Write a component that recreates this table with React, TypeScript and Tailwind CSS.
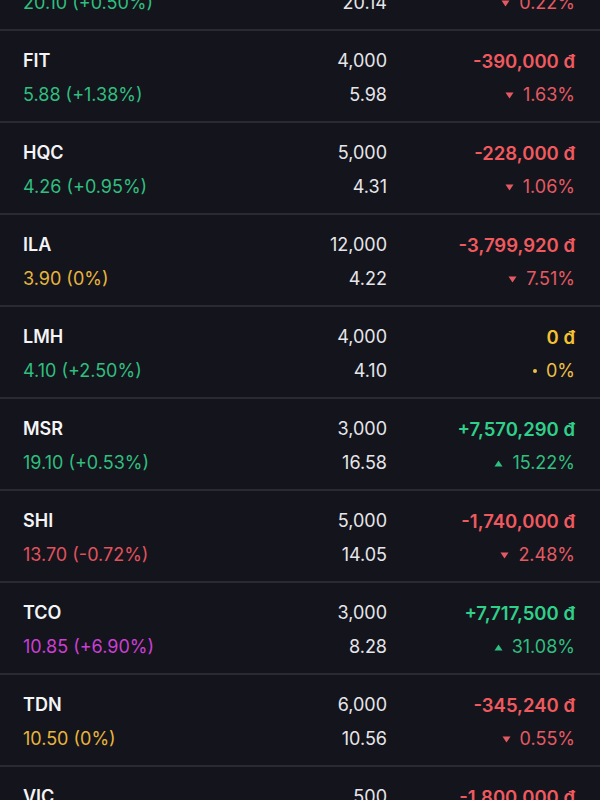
import React from "react";

type Tone = "up" | "down" | "ref" | "ceil";

type Row = {
  sym: string;
  qty: string;
  pl: string;
  plTone: Tone;
  price: string;
  priceTone: Tone;
  cost: string;
  pct: string;
};

const rows: Row[] = [
  { sym: "DXG", qty: "2,000", pl: "-88,000 đ", plTone: "down", price: "20.10 (+0.50%)", priceTone: "up", cost: "20.14", pct: "0.22%" },
  { sym: "FIT", qty: "4,000", pl: "-390,000 đ", plTone: "down", price: "5.88 (+1.38%)", priceTone: "up", cost: "5.98", pct: "1.63%" },
  { sym: "HQC", qty: "5,000", pl: "-228,000 đ", plTone: "down", price: "4.26 (+0.95%)", priceTone: "up", cost: "4.31", pct: "1.06%" },
  { sym: "ILA", qty: "12,000", pl: "-3,799,920 đ", plTone: "down", price: "3.90 (0%)", priceTone: "ref", cost: "4.22", pct: "7.51%" },
  { sym: "LMH", qty: "4,000", pl: "0 đ", plTone: "ref", price: "4.10 (+2.50%)", priceTone: "up", cost: "4.10", pct: "0%" },
  { sym: "MSR", qty: "3,000", pl: "+7,570,290 đ", plTone: "up", price: "19.10 (+0.53%)", priceTone: "up", cost: "16.58", pct: "15.22%" },
  { sym: "SHI", qty: "5,000", pl: "-1,740,000 đ", plTone: "down", price: "13.70 (-0.72%)", priceTone: "down", cost: "14.05", pct: "2.48%" },
  { sym: "TCO", qty: "3,000", pl: "+7,717,500 đ", plTone: "up", price: "10.85 (+6.90%)", priceTone: "ceil", cost: "8.28", pct: "31.08%" },
  { sym: "TDN", qty: "6,000", pl: "-345,240 đ", plTone: "down", price: "10.50 (0%)", priceTone: "ref", cost: "10.56", pct: "0.55%" },
  { sym: "VIC", qty: "500", pl: "-1,800,000 đ", plTone: "down", price: "40.10 (-0.50%)", priceTone: "down", cost: "43.70", pct: "8.24%" },
];

const priceColor: Record<Tone, string> = {
  up: "text-[#2fbf7f]",
  down: "text-[#e0525c]",
  ref: "text-[#e8b53c]",
  ceil: "text-[#cc3fd4]",
};

const plColor: Record<Tone, string> = {
  up: "text-[#2fd08a]",
  down: "text-[#f05a5f]",
  ref: "text-[#f5c331]",
  ceil: "text-[#cc3fd4]",
};

const pctColor: Record<Tone, string> = {
  up: "text-[#2fbf7f]",
  down: "text-[#e45a62]",
  ref: "text-[#eec043]",
  ceil: "text-[#cc3fd4]",
};

function Marker({ tone }: { tone: Tone }) {
  if (tone === "ref") {
    return <span className="inline-block w-[4px] h-[4px] rounded-full bg-current" />;
  }
  if (tone === "up") {
    return (
      <svg width="9" height="7" viewBox="0 0 9 7" className="fill-current">
        <path d="M4.5 0.5 L8.5 6.5 L0.5 6.5 Z" />
      </svg>
    );
  }
  return (
    <svg width="9" height="7" viewBox="0 0 9 7" className="fill-current">
      <path d="M0.5 0.5 L8.5 0.5 L4.5 6.5 Z" />
    </svg>
  );
}

export default function App() {
  return (
    <div
      className="w-[600px] h-[800px] overflow-hidden bg-[#14141c]"
      style={{ fontFamily: "Inter, 'Noto Sans', sans-serif" }}
    >
      <div className="-mt-[61px] flex flex-col">
        {rows.map((r) => (
          <div
            key={r.sym}
            className="flex items-start pl-[23px] pr-[25px] pt-[17px] pb-[13px] border-b-2 border-[#2a2a33] text-[18px] leading-[26px]"
          >
            <div className="flex flex-col gap-2 flex-1">
              <span className="font-semibold text-[#f4f4f6]">{r.sym}</span>
              <span className={priceColor[r.priceTone]}>{r.price}</span>
            </div>
            <div className="flex flex-col gap-2 items-end w-[120px] text-[#e6e6ea]">
              <span>{r.qty}</span>
              <span>{r.cost}</span>
            </div>
            <div className="flex flex-col gap-2 items-end w-[188px]">
              <span className={`font-semibold text-[18.5px] ${plColor[r.plTone]}`}>{r.pl}</span>
              <span className={`flex items-center gap-[9px] ${pctColor[r.plTone]}`}>
                <Marker tone={r.plTone} />
                {r.pct}
              </span>
            </div>
          </div>
        ))}
      </div>
    </div>
  );
}
